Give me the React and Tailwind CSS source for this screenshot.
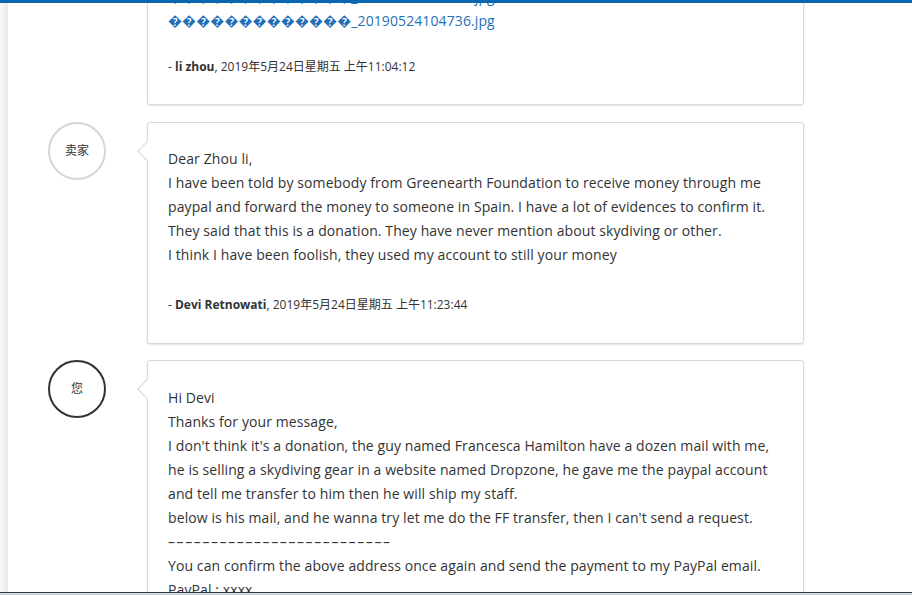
const font = { fontFamily: '"Open Sans", "Noto Sans CJK SC", sans-serif' };

const Avatar = ({ label, dark }) => (
  <div
    className={`w-[58px] h-[58px] shrink-0 rounded-full border-2 bg-white flex items-center justify-center text-[12px] text-[#333] ${
      dark ? 'border-[#333333]' : 'border-[#d6d6d6]'
    }`}
  >
    {label}
  </div>
);

const Card = ({ lines, name, date, link, footerGap = 'mt-[25px]', pt = 'pt-[23px]', pb = 'pb-[29px]' }) => (
  <div
    className={`relative w-[657px] bg-white border border-[#d9d9d9] rounded-[3px] shadow-[0_1px_2px_rgba(0,0,0,0.12)] px-[20px] ${pt} ${pb}`}
  >
    <div className="absolute left-[-8px] top-[21px] w-[14px] h-[14px] bg-white border-l border-b border-[#d9d9d9] rotate-45" />
    <div
      className={`text-[14px] leading-[24px] tracking-[0.1px] ${link ? 'text-[#1f6fb8]' : 'text-[#333]'}`}
    >
      {lines.map((l, i) => (
        <div key={i} className="whitespace-nowrap">
          {l}
        </div>
      ))}
    </div>
    {name && (
      <div className={`${footerGap} text-[12px] leading-[18px] text-[#333]`}>
        - <span className="font-bold">{name}</span>, {date}
      </div>
    )}
  </div>
);

const Row = ({ avatar, dark, className = '', children }) => (
  <div className={`flex items-start ${className}`}>
    <div className="w-[139px] shrink-0 pl-[40px]">
      <Avatar label={avatar} dark={dark} />
    </div>
    {children}
  </div>
);

const bad = '\uFFFD'.repeat(13);

export default function App() {
  return (
    <div className="relative h-[595px] w-[912px] overflow-hidden bg-white" style={font}>
      <div className="flex h-full">
        <div className="w-[8px] shrink-0 bg-gradient-to-r from-[#fafafa] to-[#e8e8e8]" />
        <div className="flex-1">
          <div className="-mt-[87px] flex flex-col">
            <Row avatar="买家">
              <Card
                link
                pb="pb-[28px]"
                lines={[
                  bad + '_20190524104521.jpg',
                  bad + '_20190524104609.jpg',
                  bad + '_20190524104702.jpg',
                  bad + '_20190524104736.jpg',
                ]}
                name="li zhou"
                date="2019年5月24日星期五 上午11:04:12"
              />
            </Row>
            <Row avatar="卖家" className="mt-[17px]">
              <Card
                pt="pt-[24px]"
                footerGap="mt-[29px]"
                lines={[
                  'Dear Zhou li,',
                  'I have been told by somebody from Greenearth Foundation to receive money through me',
                  'paypal and forward the money to someone in Spain. I have a lot of evidences to confirm it.',
                  'They said that this is a donation. They have never mention about skydiving or other.',
                  'I think I have been foolish, they used my account to still your money',
                ]}
                name="Devi Retnowati"
                date="2019年5月24日星期五 上午11:23:44"
              />
            </Row>
            <Row avatar="您" dark className="mt-[16px]">
              <Card
                pt="pt-[25px]"
                lines={[
                  'Hi Devi',
                  'Thanks for your message,',
                  "I don't think it's a donation, the guy named Francesca Hamilton have a dozen mail with me,",
                  'he is selling a skydiving gear in a website named Dropzone, he gave me the paypal account',
                  'and tell me transfer to him then he will ship my staff.',
                  "below is his mail, and he wanna try let me do the FF transfer, then I can't send a request.",
                  <span key="d" className="tracking-[1.6px]">
                    ––––––––––––––––––––––––––
                  </span>,
                  'You can confirm the above address once again and send the payment to my PayPal email.',
                  'PayPal : xxxx',
                  'Thanks',
                ]}
              />
            </Row>
          </div>
        </div>
      </div>
      <div className="absolute top-0 left-0 right-0 h-[3px] bg-[#0b66b2]" />
      <div className="absolute bottom-0 left-0 right-0 h-[3px] border-t border-[#2f3b48] bg-[#cfd6dd]" />
    </div>
  );
}
